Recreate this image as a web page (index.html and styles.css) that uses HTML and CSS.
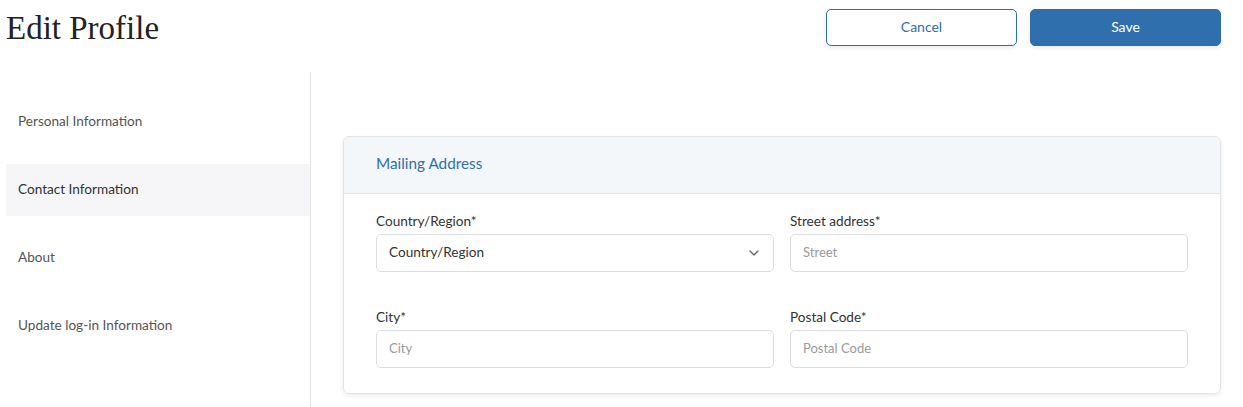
FILE: index.html
```html
<!DOCTYPE html>
<html>
<head>
<meta charset="utf-8">
<link rel="stylesheet" href="styles.css">
</head>
<body>
<div class="page">
  <header class="topbar">
    <h1 class="title">Edit Profile</h1>
    <div class="actions">
      <button class="btn btn-outline">Cancel</button>
      <button class="btn btn-primary">Save</button>
    </div>
  </header>
  <div class="main">
    <nav class="sidebar">
      <div class="nav-item">Personal Information</div>
      <div class="nav-item active">Contact Information</div>
      <div class="nav-item">About</div>
      <div class="nav-item">Update log-in Information</div>
    </nav>
    <section class="content">
      <div class="card">
        <div class="card-header">Mailing Address</div>
        <div class="card-body">
          <div class="field">
            <label class="label">Country/Region*</label>
            <div class="input select">
              <span class="value">Country/Region</span>
              <svg class="chevron" width="10" height="6" viewBox="0 0 10 6"><path d="M1 1l4 4 4-4" fill="none" stroke="#5f6470" stroke-width="1.3" stroke-linecap="round" stroke-linejoin="round"/></svg>
            </div>
          </div>
          <div class="field">
            <label class="label">Street address*</label>
            <div class="input"><span class="placeholder">Street</span></div>
          </div>
          <div class="field">
            <label class="label">City*</label>
            <div class="input"><span class="placeholder">City</span></div>
          </div>
          <div class="field">
            <label class="label">Postal Code*</label>
            <div class="input"><span class="placeholder">Postal Code</span></div>
          </div>
        </div>
      </div>
    </section>
  </div>
</div>
</body>
</html>
```
FILE: styles.css
```css
* { box-sizing: border-box; }
html, body { margin: 0; padding: 0; background: #fff; }
body {
  font-family: Lato, "Noto Sans", sans-serif;
  color: #333;
  height: 407px;
  overflow: hidden;
}
.page { padding: 0 22px 0 6px; }
.topbar {
  display: flex;
  justify-content: space-between;
  align-items: flex-start;
  height: 72px;
}
.title {
  margin: 10px 0 0 0;
  font-family: "Liberation Serif", serif;
  font-weight: normal;
  font-size: 33px;
  line-height: 36px;
  color: #222;
  letter-spacing: 0;
}
.actions {
  display: flex;
  gap: 13px;
  margin-top: 9px;
}
.btn {
  width: 191px;
  height: 37px;
  border-radius: 5px;
  font-family: Lato, "Noto Sans", sans-serif;
  font-size: 14px;
  padding: 0 0 3px 0;
  box-shadow: 0 2px 4px rgba(0,0,0,0.08);
}
.btn-outline {
  background: #fff;
  border: 1px solid #2f6fad;
  color: #2f6fad;
}
.btn-primary {
  background: #2f6fae;
  border: 1px solid #2f6fae;
  color: #fff;
}
.main {
  display: flex;
  height: 335px;
}
.sidebar {
  width: 305px;
  border-right: 1px solid #e2e2e8;
  padding-top: 24px;
  display: flex;
  flex-direction: column;
  gap: 16px;
}
.nav-item {
  height: 52px;
  display: flex;
  align-items: center;
  padding: 0 0 3px 12px;
  font-size: 13.6px;
  color: #555;
}
.nav-item.active {
  background: #f6f6f8;
  color: #333;
}
.content {
  flex: 1;
  padding: 64px 0 0 32px;
}
.card {
  border: 1px solid #e3e5ea;
  border-radius: 6px;
  box-shadow: 0 2px 4px rgba(0,0,0,0.08);
  overflow: hidden;
}
.card-header {
  height: 57px;
  background: #f4f7fa;
  border-bottom: 1px solid #e2e5ea;
  display: flex;
  align-items: center;
  padding: 0 0 5px 32px;
  font-size: 15.3px;
  color: #2f6fad;
}
.card-body {
  display: grid;
  grid-template-columns: 1fr 1fr;
  column-gap: 16px;
  row-gap: 37px;
  padding: 19px 32px 25px 32px;
}
.field { display: flex; flex-direction: column; }
.label {
  font-size: 13.6px;
  line-height: 16px;
  color: #333;
  margin-bottom: 5px;
}
.input {
  height: 38px;
  border: 1px solid #dcdde2;
  border-radius: 5px;
  display: flex;
  align-items: center;
  padding: 0 12px 2px 12px;
  font-size: 13.6px;
}
.select { justify-content: space-between; padding-right: 14px; }
.value { color: #333; }
.placeholder { color: #999; font-size: 13px; }
.chevron { display: block; margin-top: 2px; }
```
